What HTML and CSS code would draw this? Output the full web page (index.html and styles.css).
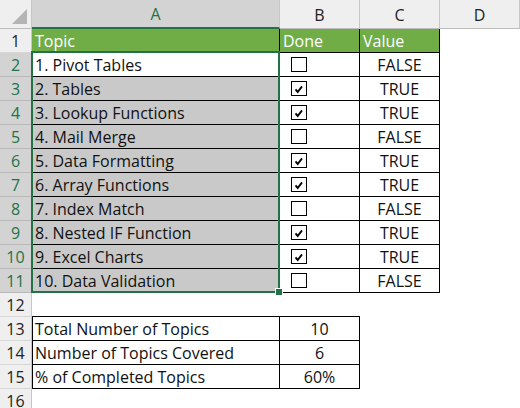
FILE: index.html
```html
<!DOCTYPE html>
<html lang="en">
<head>
  <meta charset="UTF-8">
  <meta name="viewport" content="width=device-width, initial-scale=1.0">
  <title>topics tracker</title>
  <link rel="stylesheet" href="styles.css">
</head>
<body>
  <div class="sheet">
    <!-- column headers -->
    <div class="corner"><span class="tri"></span></div>
    <div class="colh sel">A</div>
    <div class="colh">B</div>
    <div class="colh">C</div>
    <div class="colh">D</div>

    <!-- row 1 -->
    <div class="rowh">1</div>
    <div class="cell head bd">Topic</div>
    <div class="cell head bd">Done</div>
    <div class="cell head bd">Value</div>
    <div class="cell"></div>

    <div class="rowh sel">2</div>
    <div class="cell bd">1. Pivot Tables</div>
    <div class="cell bd"><span class="box"></span></div>
    <div class="cell bd ctr">FALSE</div>
    <div class="cell"></div>

    <div class="rowh sel">3</div>
    <div class="cell bd gray">2. Tables</div>
    <div class="cell bd"><span class="box"><svg viewBox="0 0 15 15"><path d="M3.5 8.5 L6 11.5 L11 5"/></svg></span></div>
    <div class="cell bd ctr">TRUE</div>
    <div class="cell"></div>

    <div class="rowh sel">4</div>
    <div class="cell bd gray">3. Lookup Functions</div>
    <div class="cell bd"><span class="box"><svg viewBox="0 0 15 15"><path d="M3.5 8.5 L6 11.5 L11 5"/></svg></span></div>
    <div class="cell bd ctr">TRUE</div>
    <div class="cell"></div>

    <div class="rowh sel">5</div>
    <div class="cell bd gray">4. Mail Merge</div>
    <div class="cell bd"><span class="box"></span></div>
    <div class="cell bd ctr">FALSE</div>
    <div class="cell"></div>

    <div class="rowh sel">6</div>
    <div class="cell bd gray">5. Data Formatting</div>
    <div class="cell bd"><span class="box"><svg viewBox="0 0 15 15"><path d="M3.5 8.5 L6 11.5 L11 5"/></svg></span></div>
    <div class="cell bd ctr">TRUE</div>
    <div class="cell"></div>

    <div class="rowh sel">7</div>
    <div class="cell bd gray">6. Array Functions</div>
    <div class="cell bd"><span class="box"><svg viewBox="0 0 15 15"><path d="M3.5 8.5 L6 11.5 L11 5"/></svg></span></div>
    <div class="cell bd ctr">TRUE</div>
    <div class="cell"></div>

    <div class="rowh sel">8</div>
    <div class="cell bd gray">7. Index Match</div>
    <div class="cell bd"><span class="box"></span></div>
    <div class="cell bd ctr">FALSE</div>
    <div class="cell"></div>

    <div class="rowh sel">9</div>
    <div class="cell bd gray">8. Nested IF Function</div>
    <div class="cell bd"><span class="box"><svg viewBox="0 0 15 15"><path d="M3.5 8.5 L6 11.5 L11 5"/></svg></span></div>
    <div class="cell bd ctr">TRUE</div>
    <div class="cell"></div>

    <div class="rowh sel">10</div>
    <div class="cell bd gray">9. Excel Charts</div>
    <div class="cell bd"><span class="box"><svg viewBox="0 0 15 15"><path d="M3.5 8.5 L6 11.5 L11 5"/></svg></span></div>
    <div class="cell bd ctr">TRUE</div>
    <div class="cell"></div>

    <div class="rowh sel">11</div>
    <div class="cell bd gray">10. Data Validation</div>
    <div class="cell bd"><span class="box"></span></div>
    <div class="cell bd ctr">FALSE</div>
    <div class="cell"></div>

    <!-- row 12 blank -->
    <div class="rowh">12</div>
    <div class="cell bb"></div>
    <div class="cell bb"></div>
    <div class="cell"></div>
    <div class="cell"></div>

    <!-- summary -->
    <div class="rowh">13</div>
    <div class="cell bd bl">Total Number of Topics</div>
    <div class="cell bd ctr">10</div>
    <div class="cell"></div>
    <div class="cell"></div>

    <div class="rowh">14</div>
    <div class="cell bd bl">Number of Topics Covered</div>
    <div class="cell bd ctr">6</div>
    <div class="cell"></div>
    <div class="cell"></div>

    <div class="rowh">15</div>
    <div class="cell bd bl">% of Completed Topics</div>
    <div class="cell bd ctr">60%</div>
    <div class="cell"></div>
    <div class="cell"></div>

    <div class="rowh">16</div>
    <div class="cell"></div>
    <div class="cell"></div>
    <div class="cell"></div>
    <div class="cell"></div>

    <!-- selected range A2:A11 -->
    <div class="selection"><span class="handle"></span></div>
  </div>
</body>
</html>
```

FILE: styles.css
```css
body{
  margin: 0;
  background: #fff;
  font-family: "Open Sans", "Liberation Sans", sans-serif;
  font-size: 16px;
  color: #111;
}
.sheet{
  position: relative;
  display: grid;
  grid-template-columns: 32px 248px 80px 80px 80px;
  grid-template-rows: 29px;
  grid-auto-rows: 24px;
  width: 520px;
  overflow: hidden;
}
.corner{
  background: #efefef;
  border-right: 1px solid #c6c6c6;
  border-bottom: 1px solid #bdbdbd;
  box-sizing: border-box;
  position: relative;
}
.tri{
  position: absolute;
  right: 4px;
  bottom: 4px;
  width: 0;
  height: 0;
  border-left: 15px solid transparent;
  border-bottom: 15px solid #b4b4b4;
}
.colh{
  background: #efefef;
  border-right: 1px solid #c6c6c6;
  border-bottom: 1px solid #bdbdbd;
  box-sizing: border-box;
  display: flex;
  align-items: center;
  justify-content: center;
  padding-top: 1px;
  color: #222;
}
.colh.sel{
  background: #d3d3d3;
  color: #217346;
  border-bottom: 2px solid #217346;
}
.rowh{
  background: #efefef;
  border-right: 1px solid #c6c6c6;
  border-bottom: 1px solid #d6d6d6;
  box-sizing: border-box;
  display: flex;
  align-items: center;
  justify-content: center;
  color: #222;
}
.rowh.sel{
  background: #d3d3d3;
  color: #217346;
  border-bottom-color: #b8b8b8;
}
.cell{
  box-sizing: border-box;
  display: flex;
  align-items: center;
  padding: 0 3px 0 3px;
  white-space: nowrap;
  overflow: hidden;
}
.bd{
  border-right: 1px solid #000;
  border-bottom: 1px solid #000;
}
.bb{
  border-bottom: 1px solid #000;
}
.bl{
  border-left: 1px solid #000;
  padding-left: 2px;
}
.head{
  background: #70ad47;
  color: #fff;
}
.gray{
  background: #c9c9c9;
}
.ctr{
  justify-content: center;
}
.box{
  display: block;
  width: 16px;
  height: 15px;
  margin-left: 8px;
  border: 1px solid #000;
  box-sizing: border-box;
  background: #fff;
}
.box svg{
  display: block;
  width: 14px;
  height: 13px;
  fill: none;
  stroke: #000;
  stroke-width: 2.2;
}
.selection{
  position: absolute;
  left: 31px;
  top: 51px;
  width: 249px;
  height: 242px;
  border: 2px solid #217346;
  box-sizing: border-box;
  pointer-events: none;
}
.handle{
  position: absolute;
  right: -5px;
  bottom: -5px;
  width: 6px;
  height: 6px;
  background: #217346;
  border: 1px solid #fff;
}
```
